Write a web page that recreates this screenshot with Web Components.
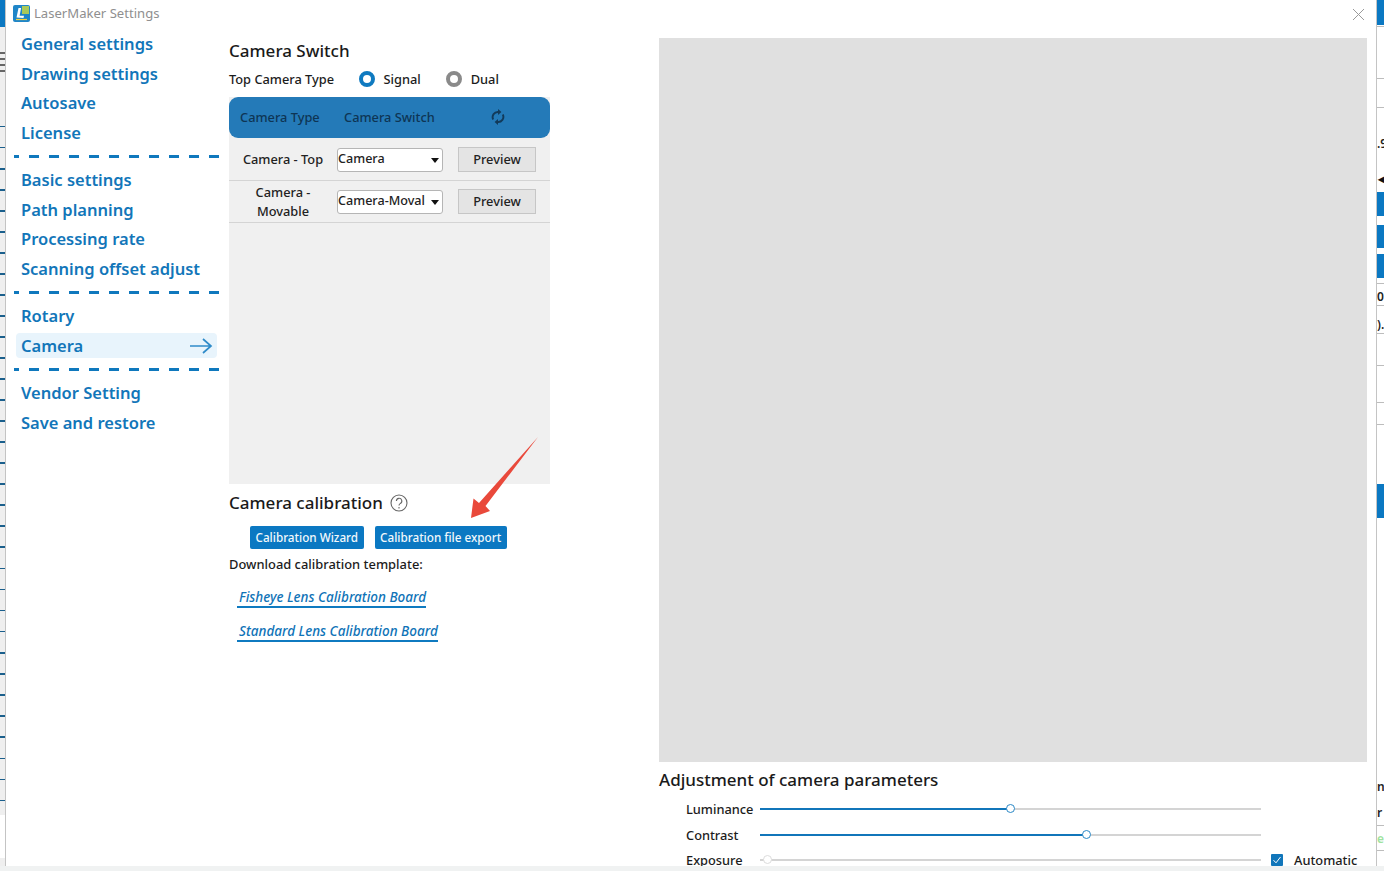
<!DOCTYPE html>
<html lang="en"><head><meta charset="utf-8"><title>LaserMaker Settings</title>
<style>html,body{margin:0;padding:0;background:#fff}body{font-family:"Noto Sans",sans-serif}</style>
</head><body>
<ls-app></ls-app>
<script>
const def=(name,css,html)=>customElements.define(name,class extends HTMLElement{
  connectedCallback(){ if(this.shadowRoot) return; const r=this.attachShadow({mode:'open'});
    r.innerHTML=`<style>${css}</style>`+(typeof html==='function'?html(this):html); }
});
def('ls-nav-item',`:host{display:flex;align-items:center;height:29.5px;box-sizing:border-box;padding-left:7px;font-size:16.5px;font-weight:600;color:#1276b9;position:relative}
:host([active])::before{content:"";position:absolute;left:2px;right:3px;top:2px;bottom:2px;background:#e8f4fc;border-radius:4px}
span{position:relative;white-space:nowrap}
svg{position:absolute;left:175px;top:5px}`,
el=>`<span><slot></slot></span>`+(el.hasAttribute('active')?`<svg width="24" height="20" viewBox="0 0 24 20" fill="none" stroke="#2f8bc9" stroke-width="1.7"><path d="M1 10H22M14 3l8 7-8 7"/></svg>`:''));
def('ls-divider',`:host{display:flex;align-items:center;height:18px}
i{display:block;width:100%;height:3px;background:linear-gradient(90deg,#0f78bd 50%,transparent 50%) 15px 0/20px 3px repeat-x}`,`<i></i>`);
def('ls-sidebar',`:host{display:block;width:206px;margin-left:8px;flex:none}`,`
<ls-nav-item>General settings</ls-nav-item><ls-nav-item>Drawing settings</ls-nav-item><ls-nav-item>Autosave</ls-nav-item><ls-nav-item>License</ls-nav-item>
<ls-divider></ls-divider>
<ls-nav-item>Basic settings</ls-nav-item><ls-nav-item>Path planning</ls-nav-item><ls-nav-item>Processing rate</ls-nav-item><ls-nav-item>Scanning offset adjust</ls-nav-item>
<ls-divider></ls-divider>
<ls-nav-item>Rotary</ls-nav-item><ls-nav-item active>Camera</ls-nav-item>
<ls-divider></ls-divider>
<ls-nav-item>Vendor Setting</ls-nav-item><ls-nav-item>Save and restore</ls-nav-item>`);
def('ls-radio',`:host{display:flex;align-items:center;font-size:12.8px;font-weight:500;color:#1c1c1c;gap:9px}
i{display:block;width:8px;height:8px;border:4px solid var(--c,#0f7ac0);border-radius:50%;background:#fff}`,`<i></i><slot></slot>`);
def('ls-select',`:host{display:flex;align-items:center;box-sizing:border-box;width:106px;height:24px;background:#fff;border:1px solid #b5b5b5;border-radius:3px;font-size:12.6px;font-weight:500;color:#222;position:relative;padding-bottom:2px;white-space:nowrap}
i{position:absolute;right:3px;top:9px;border:4.5px solid transparent;border-top:5px solid #111;border-bottom:0}`,`<slot></slot><i></i>`);
def('ls-button',`:host{display:flex;align-items:center;justify-content:center;box-sizing:border-box;width:78px;height:25px;padding-bottom:1px;background:#e4e4e4;border:1px solid #c6c6c6;font-size:12.8px;font-weight:500;color:#222}`,`<slot></slot>`);
def('ls-cam-row',`:host{display:flex;align-items:center;height:42px;box-sizing:border-box;border-bottom:1px solid #d4d4d4;font-size:12.8px;font-weight:500;color:#222}
.l{text-align:center;line-height:18.5px;width:108px;flex:none}
ls-button{margin-left:15px}`,
el=>`<div class="l">${el.getAttribute('label')}</div><ls-select>${el.getAttribute('value')}</ls-select><ls-button>Preview</ls-button>`);
def('ls-cam-table',`:host{display:block;width:321px;height:387px;background:#f0f0f0;margin-top:6px}
.h{display:flex;align-items:center;height:41px;margin-bottom:1px;background:#247ab8;border-radius:9px;font-size:12.8px;font-weight:500;color:#0e3554;padding-bottom:1px;box-sizing:border-box}
.a{margin-left:11px;width:104px}.b{width:147px}
svg{display:block}`,`
<div class="h"><span class="a">Camera Type</span><span class="b">Camera Switch</span>
<svg width="14" height="16" viewBox="0 0 14 16" fill="none" stroke="#123a5a" stroke-width="1.9"><path d="M2.2 10.5A5.2 5.2 0 0 1 7.5 3M11.8 5.5A5.2 5.2 0 0 1 6.5 13"/><path d="M7 0v6l3.4-3zM7 16v-6l-3.4 3z" fill="#123a5a" stroke="none"/></svg></div>
<ls-cam-row label="Camera - Top" value="Camera"></ls-cam-row>
<ls-cam-row label="Camera -<br>Movable" value="Camera-Moval"></ls-cam-row>`);
def('ls-blue-btn',`:host{display:flex;align-items:center;box-sizing:border-box;height:23px;padding:0 5.5px 2px;background:#0b78c2;border-radius:2px;color:#f2f8fc;font-size:11.7px;font-weight:500;white-space:nowrap}`,`<slot></slot>`);
def('ls-link',`:host{display:block;width:max-content;margin-left:8px;font-size:13.5px;font-style:italic;font-weight:500;color:#0f73b7;border-bottom:2px solid #0f7ac0;line-height:15px;padding:0 0 1px 2px}`,`<slot></slot>`);
def('ls-camera-panel',`:host{display:block;width:321px;flex:none;margin-left:9px;position:relative}
h2{margin:0;font-size:17px;font-weight:500;color:#1a1a1a;line-height:24px}
.sw{margin-top:10px}
.type{display:flex;align-items:center;height:24px;margin-top:4px;font-size:12.8px;font-weight:500;color:#1c1c1c}
.type span{width:129px;white-space:nowrap}
ls-radio+ls-radio{margin-left:25px;--c:#8a8a8a}
ls-radio{position:relative;left:.5px}
.cal{display:flex;align-items:center;margin-top:7px;gap:7px}
svg.q{display:block}
.btns{display:flex;gap:11px;margin:11px 0 0 21px}
.dl{font-size:12.9px;font-weight:500;color:#1c1c1c;line-height:18px;margin-top:6px}
ls-link.f{margin-top:17px}ls-link+ls-link{margin-top:16px}
svg.arrow{position:absolute;left:242px;top:408px;overflow:visible}`,`
<h2 class="sw">Camera Switch</h2>
<div class="type"><span>Top Camera Type</span><ls-radio>Signal</ls-radio><ls-radio>Dual</ls-radio></div>
<ls-cam-table></ls-cam-table>
<div class="cal"><h2>Camera calibration</h2>
<svg class="q" width="18" height="18" viewBox="0 0 18 18" fill="none" stroke="#666" stroke-width="1.1"><circle cx="9" cy="9" r="8"/><path d="M6.4 7a2.7 2.7 0 1 1 4 2.4c-1 .6-1.4 1-1.4 2.2"/><path d="M9 13v1.4"/></svg></div>
<div class="btns"><ls-blue-btn>Calibration Wizard</ls-blue-btn><ls-blue-btn>Calibration file export</ls-blue-btn></div>
<div class="dl">Download calibration template:</div>
<ls-link class="f">Fisheye Lens Calibration Board</ls-link>
<ls-link>Standard Lens Calibration Board</ls-link>
<svg class="arrow" width="70" height="84" viewBox="471 437 70 84"><polygon points="538,437 485.5,506 490,511 471,518 473.5,498.5 479,503" fill="#e9493b"/></svg>`);
def('ls-slider',`:host{display:flex;align-items:center;height:25.7px;font-size:12.8px;font-weight:500;color:#1c1c1c;margin-left:27px}
.l{width:74px;flex:none}
.t{width:501px;height:2px;background:#d4d4d4;position:relative;flex:none}
.f{position:absolute;left:0;top:0;height:2px;background:#1176ba}
.k{position:absolute;top:-4px;width:7px;height:7px;margin-left:-4.5px;border:1.5px solid #2a88c6;border-radius:50%;background:#fff}
:host([off]) .f{display:none}
:host([off]) .k{border-color:#dcdcdc}
.c{display:flex;align-items:center;margin-left:10px;gap:11px;white-space:nowrap}
.c i{display:flex;width:12px;height:12px;background:#1176ba;border-radius:1px}`,
el=>{const v=el.getAttribute('v');return `<span class="l"><slot></slot></span><div class="t"><div class="f" style="width:${v}px"></div><div class="k" style="left:${v}px"></div></div>`+(el.hasAttribute('auto')?`<span class="c"><i><svg width="12" height="12" viewBox="0 0 12 12" fill="none" stroke="#fff" stroke-width="1"><path d="M2.5 6.2 5 8.8 9.5 3"/></svg></i>Automatic</span>`:'')});
def('ls-preview-panel',`:host{display:block;width:708px;flex:none;margin-left:109px;padding-top:9px}
.img{height:724px;background:#e0e0e0}
h2{margin:4px 0 3px;font-size:17px;font-weight:500;line-height:27px;color:#1a1a1a}`,`
<div class="img"></div><h2>Adjustment of camera parameters</h2>
<ls-slider v="250">Luminance</ls-slider><ls-slider v="326">Contrast</ls-slider><ls-slider v="7" off auto>Exposure</ls-slider>`);
def('ls-titlebar',`:host{display:flex;align-items:center;height:29px;box-sizing:border-box;padding:0 0 3px 7px;color:#8f8f8f;font-size:13.1px;position:relative}
svg.logo{margin-right:4px;display:block}
svg.x{position:absolute;right:11px;top:8px}`,`
<svg class="logo" width="17" height="17" viewBox="0 0 17 17"><rect width="17" height="17" rx="2" fill="#1f86c8"/><path d="M9 1h7v8H9z" fill="#a9c95a"/><path d="M3.5 12.5 5.5 3h2.6L6.6 10.8H11l-.5 2.2z" fill="#fff"/><path d="M3 14.5h11" stroke="#f2d23c" stroke-width="1.2"/></svg>
LaserMaker Settings
<svg class="x" width="13" height="13" viewBox="0 0 13 13" stroke="#9a9a9a" stroke-width="1"><path d="M1 1l11 11M12 1 1 12"/></svg>`);
def('ls-left-strip',`:host{display:block;width:5px;flex:none;background:#efefef;border-right:1px solid #c4c4c4;position:relative;overflow:hidden}
.top{height:27px;background:#0b78c2}
.mn{position:absolute;left:0;top:52px;width:5px;height:20px;background:repeating-linear-gradient(#666 0 2px,transparent 2px 6px)}
.t{position:absolute;left:0;top:441px;width:5px;height:360px;background:repeating-linear-gradient(#1a5f8c 0 1.5px,transparent 1.5px 21.1px)}
.t2{position:absolute;left:0;top:126px;width:5px;height:315px;background:repeating-linear-gradient(#1a5f8c 0 1.5px,transparent 1.5px 21px)}
.w{position:absolute;left:0;top:815px;width:5px;height:43px;background:#fff}`,`<div class="top"></div><div class="mn"></div><div class="t2"></div><div class="t"></div><div class="w"></div>`);
def('ls-right-strip',`:host{display:block;width:7px;flex:none;background:#fff;border-left:1px solid #c4c4c4;position:relative;overflow:hidden}
b{position:absolute;left:0;width:7px;background:#0b78c2}
u{position:absolute;left:0;width:7px;height:1px;background:#bdbdbd}
s{position:absolute;left:0;font:600 12px "Noto Sans",sans-serif;text-decoration:none;color:#222;line-height:14px}`,`
<b style="top:0;height:25px"></b>
<u style="top:26px"></u><u style="top:78px"></u><u style="top:107px"></u>
<s style="top:137px">.9</s><s style="top:172px;color:#111;left:1px">◂</s>
<b style="top:192px;height:24px"></b><b style="top:225px;height:23px"></b><b style="top:254px;height:24px"></b>
<u style="top:283px"></u><s style="top:290px">0</s><u style="top:305px"></u><s style="top:318px">).</s><u style="top:333px"></u><u style="top:365px"></u><u style="top:402px"></u><u style="top:424px"></u>
<b style="top:484px;height:34px"></b>
<s style="top:780px">n</s><s style="top:806px">r</s><u style="top:825px"></u><s style="top:832px;color:#9fe39f">e</s><u style="top:850px"></u>`);
def('ls-app',`:host{display:flex;width:1384px;height:871px;overflow:hidden;position:relative;background:#f0f2f2}
.win{display:flex;width:1384px;height:866px;flex:none;overflow:hidden;background:#fff}
.d{flex:1;min-width:0;display:flex;flex-direction:column;overflow:hidden}
.b{display:flex;flex:1;min-height:0}`,`
<div class="win"><ls-left-strip></ls-left-strip>
<div class="d"><ls-titlebar></ls-titlebar><div class="b"><ls-sidebar></ls-sidebar><ls-camera-panel></ls-camera-panel><ls-preview-panel></ls-preview-panel></div></div>
<ls-right-strip></ls-right-strip></div>`);
</script>
</body></html>
